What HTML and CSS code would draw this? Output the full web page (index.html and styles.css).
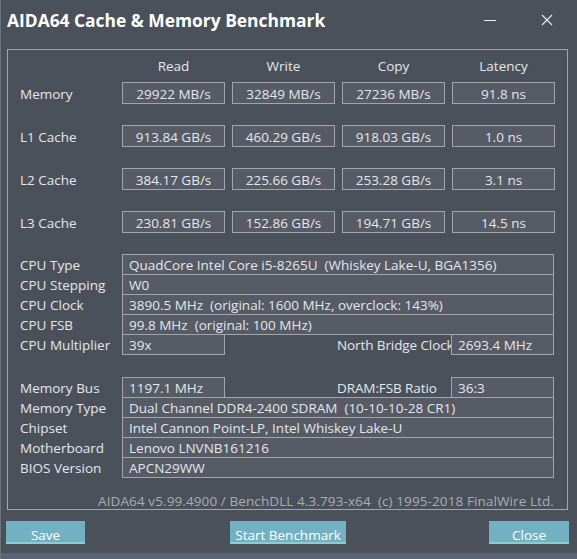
FILE: index.html
```html
<!DOCTYPE html>
<html>
<head>
<meta charset="utf-8">
<link rel="stylesheet" href="styles.css">
</head>
<body>
<div class="window">
  <div class="titlebar">
    <div class="title">AIDA64 Cache &amp; Memory Benchmark</div>
    <div class="controls">
      <svg class="ctl" width="16" height="16" viewBox="0 0 16 16"><line x1="2" y1="8.5" x2="14" y2="8.5" stroke="#e8ebef" stroke-width="1"/></svg>
      <svg class="ctl" width="16" height="16" viewBox="0 0 16 16"><path d="M3 3 L13 13 M13 3 L3 13" stroke="#e8ebef" stroke-width="1.1" fill="none"/></svg>
    </div>
  </div>

  <div class="group">
    <div class="bench">
      <div class="brow head">
        <div></div>
        <div class="hdr">Read</div>
        <div class="hdr">Write</div>
        <div class="hdr">Copy</div>
        <div class="hdr">Latency</div>
      </div>
      <div class="brow">
        <div class="lbl">Memory</div>
        <div class="val">29922 MB/s</div>
        <div class="val">32849 MB/s</div>
        <div class="val">27236 MB/s</div>
        <div class="val">91.8 ns</div>
      </div>
      <div class="brow">
        <div class="lbl">L1 Cache</div>
        <div class="val">913.84 GB/s</div>
        <div class="val">460.29 GB/s</div>
        <div class="val">918.03 GB/s</div>
        <div class="val">1.0 ns</div>
      </div>
      <div class="brow">
        <div class="lbl">L2 Cache</div>
        <div class="val">384.17 GB/s</div>
        <div class="val">225.66 GB/s</div>
        <div class="val">253.28 GB/s</div>
        <div class="val">3.1 ns</div>
      </div>
      <div class="brow">
        <div class="lbl">L3 Cache</div>
        <div class="val">230.81 GB/s</div>
        <div class="val">152.86 GB/s</div>
        <div class="val">194.71 GB/s</div>
        <div class="val">14.5 ns</div>
      </div>
    </div>

    <div class="info cpu">
      <div class="row"><div class="ilbl">CPU Type</div><div class="ibox wide">QuadCore Intel Core i5-8265U&nbsp; (Whiskey Lake-U, BGA1356)</div></div>
      <div class="row"><div class="ilbl">CPU Stepping</div><div class="ibox wide">W0</div></div>
      <div class="row"><div class="ilbl">CPU Clock</div><div class="ibox wide">3890.5 MHz&nbsp; (original: 1600 MHz, overclock: 143%)</div></div>
      <div class="row"><div class="ilbl">CPU FSB</div><div class="ibox wide">99.8 MHz&nbsp; (original: 100 MHz)</div></div>
      <div class="row"><div class="ilbl">CPU Multiplier</div><div class="ibox short">39x</div><div class="ilbl2">North Bridge Clock</div><div class="ibox short">2693.4 MHz</div></div>
    </div>

    <div class="info mem">
      <div class="row"><div class="ilbl">Memory Bus</div><div class="ibox short">1197.1 MHz</div><div class="ilbl2">DRAM:FSB Ratio</div><div class="ibox short">36:3</div></div>
      <div class="row"><div class="ilbl">Memory Type</div><div class="ibox wide">Dual Channel DDR4-2400 SDRAM&nbsp; (10-10-10-28 CR1)</div></div>
      <div class="row"><div class="ilbl">Chipset</div><div class="ibox wide">Intel Cannon Point-LP, Intel Whiskey Lake-U</div></div>
      <div class="row"><div class="ilbl">Motherboard</div><div class="ibox wide">Lenovo LNVNB161216</div></div>
      <div class="row"><div class="ilbl">BIOS Version</div><div class="ibox wide">APCN29WW</div></div>
    </div>

    <div class="footer">AIDA64 v5.99.4900 / BenchDLL 4.3.793-x64&nbsp; (c) 1995-2018 FinalWire Ltd.</div>
  </div>

  <div class="buttons">
    <div class="btn b-save"><div class="face">Save</div><div class="stripe"></div></div>
    <div class="btn b-start"><div class="face">Start Benchmark</div><div class="stripe"></div></div>
    <div class="btn b-close"><div class="face">Close</div><div class="stripe"></div></div>
  </div>
  <div class="status"></div>
</div>
</body>
</html>
```

FILE: styles.css
```css
* { box-sizing: border-box; }
html, body { margin: 0; padding: 0; }
body {
  background: #4b515b;
  font-family: "Open Sans", "Noto Sans", sans-serif;
  font-size: 13.5px;
  color: #e4e7eb;
}
.window {
  width: 577px;
  height: 559px;
  background: #4b515b;
  border-left: 1px solid #6e737c;
  overflow: hidden;
}
.titlebar {
  height: 38px;
  display: flex;
  align-items: center;
  justify-content: space-between;
  padding-left: 6px;
}
.title {
  font-weight: 700;
  font-size: 17.4px;
  color: #ffffff;
  padding-top: 1px;
}
.controls {
  display: flex;
  gap: 41px;
  padding-right: 22px;
  padding-top: 1px;
}
.ctl { display: block; }

.group {
  margin-top: 11px;
  margin-left: 6px;
  width: 561px;
  height: 461px;
  border: 1px solid #a2a6ac;
  padding-left: 12px;
  overflow: hidden;
}
.bench { display: flex; flex-direction: column; }
.brow {
  display: grid;
  grid-template-columns: 95px repeat(4, 103px);
  column-gap: 7px;
  height: 22px;
  margin-top: 21px;
}
.brow.head {
  height: 32px;
  margin-top: 0;
}
.brow.head + .brow { margin-top: 0; }
.hdr {
  text-align: center;
  padding-top: 7px;
  line-height: 18px;
}
.lbl {
  line-height: 22px;
  padding-top: 1px;
  white-space: nowrap;
}
.val {
  border: 1px solid #a2a6ac;
  background: #565b65;
  text-align: center;
  line-height: 20px;
  height: 22px;
  padding-top: 1px;
  white-space: nowrap;
}

.info { display: flex; flex-direction: column; }
.cpu { margin-top: 21px; }
.mem { margin-top: 22px; }
.row {
  display: flex;
  height: 21px;
  margin-top: -1px;
}
.row:first-child { margin-top: 0; }
.ilbl {
  width: 102px;
  line-height: 21px;
  padding-top: 1px;
  white-space: nowrap;
}
.ilbl2 {
  width: 114px;
  margin-left: 112px;
  line-height: 21px;
  padding-top: 1px;
  white-space: nowrap;
  letter-spacing: -0.1px;
}
.ibox {
  border: 1px solid #a2a6ac;
  background: #565b65;
  height: 21px;
  line-height: 19px;
  padding-left: 6px;
  padding-top: 1px;
  white-space: nowrap;
}
.wide { width: 432px; }
.short { width: 103px; }
.footer {
  margin-top: 14px;
  padding-right: 13px;
  text-align: right;
  color: #a9adb3;
  line-height: 18px;
  letter-spacing: 0.1px;
  white-space: nowrap;
}

.buttons {
  display: flex;
  margin-top: 11px;
  padding-left: 5px;
  height: 23px;
}
.btn {
  display: flex;
  flex-direction: column;
  height: 23px;
}
.face {
  height: 21px;
  background: #72b1c1;
  color: #ffffff;
  text-align: center;
  overflow: hidden;
  padding-top: 5px;
  line-height: 18px;
}
.stripe {
  height: 2px;
  background: #8ccdd3;
}
.b-save { width: 79px; }
.b-start { width: 116px; margin-left: 145px; }
.b-close { width: 80px; margin-left: 143px; }
.status {
  margin-top: 9px;
  height: 6px;
  background: #5b6376;
}
```
